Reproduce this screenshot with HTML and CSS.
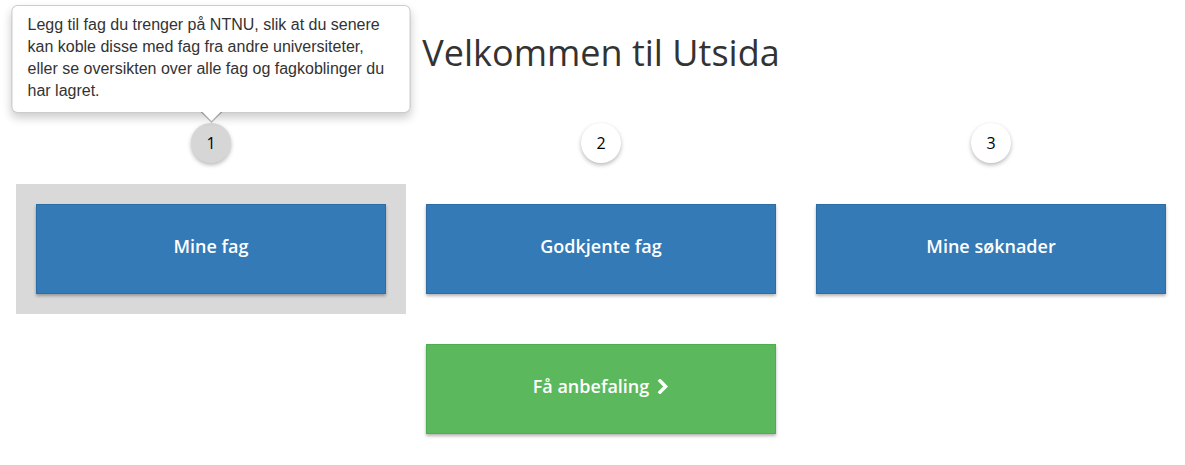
FILE: index.html
```html
<!DOCTYPE html>
<html lang="no">
<head>
<meta charset="utf-8">
<title>Utsida</title>
<link rel="stylesheet" href="styles.css">
</head>
<body>
<main class="page">
  <h1 class="title">Velkommen til Utsida</h1>
  <div class="grid steps">
    <div class="col">
      <div class="step active">
        1
        <div class="popover">Legg til fag du trenger på NTNU, slik at du senere kan koble disse med fag fra andre universiteter, eller se oversikten over alle fag og fagkoblinger du har lagret.</div>
      </div>
    </div>
    <div class="col"><div class="step">2</div></div>
    <div class="col"><div class="step">3</div></div>
  </div>
  <div class="grid buttons">
    <div class="col cell highlight"><a class="btn blue">Mine fag</a></div>
    <div class="col cell"><a class="btn blue">Godkjente fag</a></div>
    <div class="col cell"><a class="btn blue">Mine søknader</a></div>
  </div>
  <div class="grid buttons second">
    <div class="col cell"></div>
    <div class="col cell"><a class="btn green">Få anbefaling <svg class="chev" width="12" height="15" viewBox="0 0 12 15"><path d="M3 1.8 L8.6 7.5 L3 13.2" fill="none" stroke="#fff" stroke-width="3.4" stroke-linecap="square" stroke-linejoin="miter"/></svg></a></div>
    <div class="col cell"></div>
  </div>
</main>
</body>
</html>
```
FILE: styles.css
```css
html, body {
  margin: 0;
  padding: 0;
  overflow: hidden;
  background: #fff;
}
body {
  font-family: "Open Sans", "Liberation Sans", sans-serif;
  color: #333;
}
.page {
  padding: 33px 0 0 16px;
  width: 1170px;
}
.title {
  margin: 0;
  font-size: 36px;
  line-height: 40px;
  font-weight: 400;
  text-align: center;
  color: #333;
}
.grid {
  display: grid;
  grid-template-columns: repeat(3, 390px);
}
.steps {
  margin-top: 50px;
}
.steps .col {
  display: flex;
  justify-content: center;
}
.step {
  position: relative;
  width: 40px;
  height: 40px;
  border-radius: 50%;
  background: #fff;
  box-shadow: 0 2px 4px rgba(0,0,0,0.28);
  display: flex;
  align-items: center;
  justify-content: center;
  font-size: 16px;
  font-weight: 500;
  color: #000;
}
.step.active {
  background: #d6d6d6;
}
.popover {
  position: absolute;
  bottom: calc(100% + 10px);
  left: 50%;
  transform: translateX(-50%);
  width: 399px;
  box-sizing: border-box;
  padding: 8px 14px 10px 15px;
  background: #fff;
  border: 1px solid rgba(0,0,0,0.2);
  border-radius: 6px;
  box-shadow: 0 5px 10px rgba(0,0,0,0.2);
  font-family: "Liberation Sans", Arial, sans-serif;
  font-size: 16px;
  font-weight: 400;
  line-height: 22px;
  color: #333;
  text-align: left;
}
.popover::before,
.popover::after {
  content: "";
  position: absolute;
  left: 50%;
  width: 0;
  height: 0;
  border-style: solid;
}
.popover::before {
  top: 100%;
  margin-left: -11px;
  border-width: 11px 11px 0;
  border-color: rgba(0,0,0,0.25) transparent transparent;
}
.popover::after {
  top: 100%;
  margin-left: -10px;
  margin-top: -1px;
  border-width: 10px 10px 0;
  border-color: #fff transparent transparent;
}
.buttons {
  margin-top: 21px;
}
.buttons.second {
  margin-top: 10px;
}
.cell {
  padding: 20px;
}
.highlight {
  background: #d9d9d9;
}
.btn {
  display: flex;
  align-items: center;
  justify-content: center;
  gap: 8px;
  height: 90px;
  padding-bottom: 6px;
  box-sizing: border-box;
  font-size: 18px;
  font-weight: 600;
  color: #fff;
  box-shadow: 0 2px 3px rgba(0,0,0,0.3);
  cursor: pointer;
}
.blue {
  background: #337ab7;
  border: 1px solid #2e6da4;
}
.green {
  background: #5cb85c;
  border: 1px solid #4cae4c;
}
.chev {
  display: block;
  margin-top: 1px;
}
```
